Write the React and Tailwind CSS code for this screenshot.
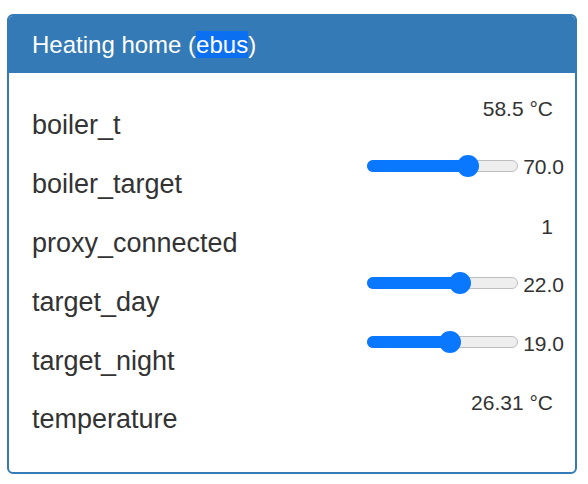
const rows = [
  { name: "boiler_t", value: "58.5 °C" },
  { name: "boiler_target", value: "70.0", slider: 0.7 },
  { name: "proxy_connected", value: "1" },
  { name: "target_day", value: "22.0", slider: 0.64 },
  { name: "target_night", value: "19.0", slider: 0.56 },
  { name: "temperature", value: "26.31 °C" },
];

function Slider({ pos }) {
  // thumb center travels between 11px and 139px of the 150px track
  const center = 11 + pos * 128;
  return (
    <div className="relative w-[151px] h-[22px]">
      <div className="absolute left-0 right-0 top-[5px] h-[12px] rounded-full bg-[#eeeeee] border border-[#bdbdbd]" />
      <div
        className="absolute left-0 top-[5px] h-[12px] rounded-l-full bg-[#0a77ff]"
        style={{ width: center }}
      />
      <div
        className="absolute top-0 w-[22px] h-[22px] rounded-full bg-[#0a77ff]"
        style={{ left: center - 11 }}
      />
    </div>
  );
}

export default function App() {
  return (
    <div
      className="w-[588px] h-[484px] bg-white pt-[14px] pl-[7px]"
      style={{ fontFamily: '"Liberation Sans", Arial, sans-serif' }}
    >
      <div className="w-[570px] h-[460px] border-2 border-[#337ab7] rounded-[6px] overflow-hidden">
        <div className="h-[57px] bg-[#337ab7] pl-[23px] flex items-center">
          <h1 className="text-[24px] leading-[27px] text-white">
            Heating home (<span className="bg-[#0b6ff2]">ebus</span>)
          </h1>
        </div>
        <div className="pt-[23px] text-[#333333]">
          {rows.map((r) => (
            <div key={r.name} className="h-[58.8px] flex justify-between pl-[23px] pr-[22px]">
              <div className="self-center text-[27px] leading-[30px]">{r.name}</div>
              {r.slider !== undefined ? (
                <div className="flex items-center gap-[5px] h-[22px] -mr-[11px]">
                  <Slider pos={r.slider} />
                  <span className="text-[21px] leading-[24px] mt-[3px]">{r.value}</span>
                </div>
              ) : (
                <div className="text-[21px] leading-[24px] mt-[1px]">{r.value}</div>
              )}
            </div>
          ))}
        </div>
      </div>
    </div>
  );
}
